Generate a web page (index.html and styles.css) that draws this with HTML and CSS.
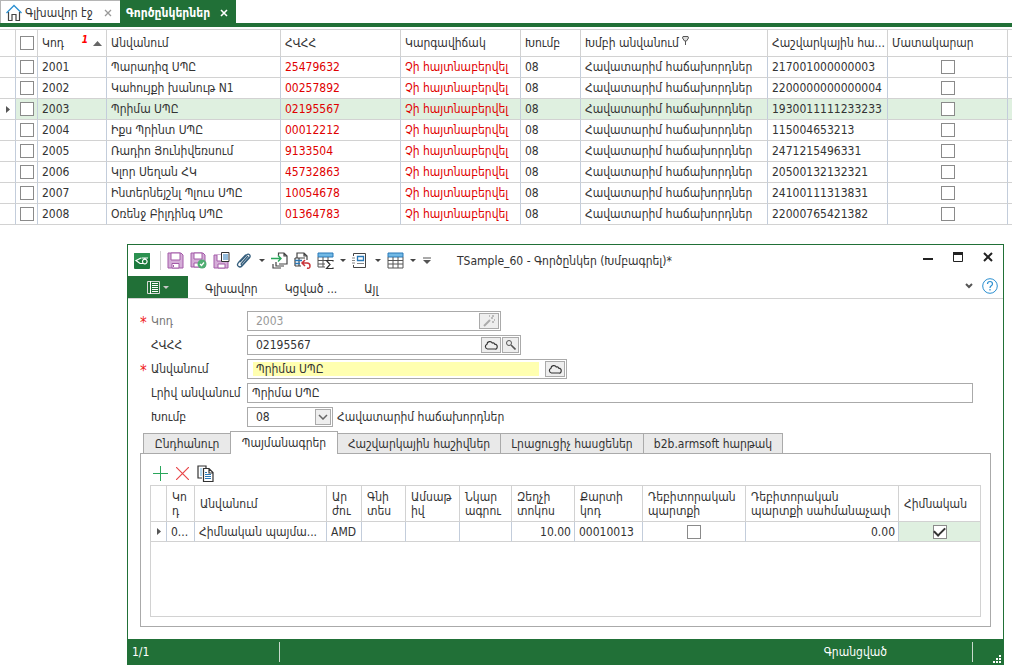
FILE: index.html
```html
<!DOCTYPE html>
<html lang="hy">
<head>
<meta charset="utf-8">
<meta name="viewport" content="width=device-width, initial-scale=1">
<title>Գործընկերներ</title>
<link rel="stylesheet" href="styles.css">
</head>
<body>
<nav class="doc-tabs">
  <div class="doc-tab">
    <svg class="home" width="16" height="18" viewBox="0 0 16 18" fill="none"><path d="M2.500 8v8.500h3.500v-6h4v6h3.500V8" stroke="#444" stroke-width="1.200"/><path d="M.5 9 8 1.500 15.500 9" stroke="#2b8fd0" stroke-width="1.300"/></svg>
    <a href="#home">Գլխավոր էջ</a>
    <button class="tab-close" aria-label="Փակել"><svg width="8" height="8" viewBox="0 0 8 8"><path d="M1 1l6 6M7 1 1 7" stroke="currentColor" stroke-width="1.300"/></svg></button>
  </div>
  <div class="doc-tab doc-tab-active">
    <a href="#partners">Գործընկերներ</a>
    <button class="tab-close" aria-label="Փակել"><svg width="8" height="8" viewBox="0 0 8 8"><path d="M1 1l6 6M7 1 1 7" stroke="currentColor" stroke-width="1.600"/></svg></button>
  </div>
</nav>

<table class="grid main-grid">
  <colgroup><col class="w-mark"><col class="w-check"><col class="w-code"><col class="w-name"><col class="w-wide"><col class="w-wide"><col class="w-group"><col class="w-gname"><col class="w-wide"><col class="w-wide"><col></colgroup>
  <thead>
    <tr>
      <th></th>
      <th class="mid"><input type="checkbox" class="box" aria-label="Ընտրել բոլորը"></th>
      <th><div class="sort-head"><span>Կոդ</span><span class="sort-no">1</span><svg width="9" height="5" viewBox="0 0 9 5"><path d="M0 5 4.500 0 9 5z" fill="#666"/></svg></div></th>
      <th>Անվանում</th><th>ՀՎՀՀ</th><th>Կարգավիճակ</th><th>Խումբ</th>
      <th>Խմբի անվանում <svg class="pin" width="7" height="9" viewBox="0 0 7 9"><path d="M1 .5h5L6.500 2 4.500 5h-2L.5 2z" fill="#ddd" stroke="#555"/><path d="M3.500 5v4" stroke="#555"/></svg></th>
      <th class="tight">Հաշվարկային հա...</th><th>Մատակարար</th><th></th>
    </tr>
  </thead>
  <tbody>
    <tr><td></td><td class="mid"><input type="checkbox" class="box" aria-label="2001"></td><td>2001</td><td>Պարադիզ ՍՊԸ</td><td class="red">25479632</td><td class="red">Չի հայտնաբերվել</td><td>08</td><td>Հավատարիմ հաճախորդներ</td><td>217001000000003</td><td class="mid"><input type="checkbox" class="box" aria-label="Մատակարար 2001"></td><td></td></tr>
    <tr><td></td><td class="mid"><input type="checkbox" class="box" aria-label="2002"></td><td>2002</td><td>Կահույքի խանութ N1</td><td class="red">00257892</td><td class="red">Չի հայտնաբերվել</td><td>08</td><td>Հավատարիմ հաճախորդներ</td><td>2200000000000004</td><td class="mid"><input type="checkbox" class="box" aria-label="Մատակարար 2002"></td><td></td></tr>
    <tr class="current"><td class="mid marker"><svg width="4" height="7" viewBox="0 0 4 7"><path d="M0 0 4 3.500 0 7z" fill="#555"/></svg></td><td class="mid"><input type="checkbox" class="box" aria-label="2003"></td><td>2003</td><td>Պրիմա ՍՊԸ</td><td class="red">02195567</td><td class="red">Չի հայտնաբերվել</td><td>08</td><td>Հավատարիմ հաճախորդներ</td><td>1930011111233233</td><td class="mid"><input type="checkbox" class="box" aria-label="Մատակարար 2003"></td><td></td></tr>
    <tr><td></td><td class="mid"><input type="checkbox" class="box" aria-label="2004"></td><td>2004</td><td>Իքս Պրինտ ՍՊԸ</td><td class="red">00012212</td><td class="red">Չի հայտնաբերվել</td><td>08</td><td>Հավատարիմ հաճախորդներ</td><td>115004653213</td><td class="mid"><input type="checkbox" class="box" aria-label="Մատակարար 2004"></td><td></td></tr>
    <tr><td></td><td class="mid"><input type="checkbox" class="box" aria-label="2005"></td><td>2005</td><td>Ռադիո Յունիվեռսում</td><td class="red">9133504</td><td class="red">Չի հայտնաբերվել</td><td>08</td><td>Հավատարիմ հաճախորդներ</td><td>2471215496331</td><td class="mid"><input type="checkbox" class="box" aria-label="Մատակարար 2005"></td><td></td></tr>
    <tr><td></td><td class="mid"><input type="checkbox" class="box" aria-label="2006"></td><td>2006</td><td>Կլոր Սեղան ՀԿ</td><td class="red">45732863</td><td class="red">Չի հայտնաբերվել</td><td>08</td><td>Հավատարիմ հաճախորդներ</td><td>20500132132321</td><td class="mid"><input type="checkbox" class="box" aria-label="Մատակարար 2006"></td><td></td></tr>
    <tr><td></td><td class="mid"><input type="checkbox" class="box" aria-label="2007"></td><td>2007</td><td>Ինտերնեյշնլ Պլուս ՍՊԸ</td><td class="red">10054678</td><td class="red">Չի հայտնաբերվել</td><td>08</td><td>Հավատարիմ հաճախորդներ</td><td>24100111313831</td><td class="mid"><input type="checkbox" class="box" aria-label="Մատակարար 2007"></td><td></td></tr>
    <tr><td></td><td class="mid"><input type="checkbox" class="box" aria-label="2008"></td><td>2008</td><td>Օռենջ Բիլդինգ ՍՊԸ</td><td class="red">01364783</td><td class="red">Չի հայտնաբերվել</td><td>08</td><td>Հավատարիմ հաճախորդներ</td><td>22000765421382</td><td class="mid"><input type="checkbox" class="box" aria-label="Մատակարար 2008"></td><td></td></tr>
  </tbody>
</table>

<section class="window">
  <header class="titlebar">
    <svg class="logo" width="16" height="16" viewBox="0 0 16 16"><rect width="16" height="16" rx="1" fill="#1c7a3e"/><path d="M0 1q0-1 1-1h14q1 0 1 1v4L0 8z" fill="#2b9150"/><path d="M7 5 2 7.500 6 10.500h3M7.500 5H14M8.500 8.500a2.300 2.300 0 1 0 4.600 0 2.300 2.300 0 1 0-4.600 0" fill="none" stroke="#fff" stroke-width="1.200"/></svg>
    <span class="divider"></span>
    <div class="tools">
      <button aria-label="Գրանցել"><svg width="17" height="17" viewBox="0 0 17 17"><path d="M1 1h13l2 2v13H1z" fill="#d5aed8" stroke="#a35aa8"/><path d="M4 1h9v7H4zM5 11.500h7V16H5z" fill="#fff" stroke="#a35aa8"/><path d="M6 13h1v2H6z" fill="#a35aa8"/></svg></button>
      <button aria-label="Գրանցել և փակել"><svg width="17" height="17" viewBox="0 0 17 17"><path d="M1 1h12l2 2v12H1z" fill="#d5aed8" stroke="#a35aa8"/><path d="M4 1h8v6H4zM4 11h7v4H4z" fill="#fff" stroke="#a35aa8"/><circle cx="12" cy="12" r="4.500" fill="#4fae72"/><path d="m10 12 1.500 1.500L14 10.500" fill="none" stroke="#fff" stroke-width="1.200"/></svg></button>
      <button aria-label="Գրանցել որպես"><svg width="17" height="17" viewBox="0 0 17 17"><path d="M1 3h14v13H1z" fill="#d5aed8" stroke="#a35aa8"/><path d="M4 3v6h8V3M5 12h7v4H5z" fill="#fff" stroke="#a35aa8"/><path d="M8.500.5h7.500v9H8.500z" fill="#fff" stroke="#333"/><path d="M10 3h5M10 5h5M10 7h5" stroke="#2878b8"/></svg></button>
      <button class="has-menu" aria-label="Կցել"><svg width="17" height="17" viewBox="0 0 17 17"><path d="m4 10 6.500-7c2-2 5 .5 3 2.700l-7.500 8.300c-2.500 2.500-6-.5-3.700-3.200l7.500-8M12 4l-6.500 7.500c-1 1.200.5 2.200 1.300 1.200L13.500 5" fill="none" stroke="#365f7d" stroke-width="1.300"/></svg><i class="caret"></i></button>
      <button aria-label="Ներմուծել"><svg width="17" height="17" viewBox="0 0 17 17" fill="none"><path d="M7.500 4V1h5.500l3 3v8H8M13 1v3h3M5 10v4h8M2 12v4h8" stroke="#444" stroke-width="1.200"/><path d="M0 6.500h10M7 3.500l3 3-3 3" stroke="#2aa65b" stroke-width="1.400"/></svg></button>
      <button aria-label="Վերականգնել"><svg width="17" height="17" viewBox="0 0 17 17" fill="none"><path d="M3 6V1h7l3 3v4M10 1v3h3M1 6h10M1 14V6m4 0v8M1 14h6" stroke="#444" stroke-width="1.200"/><path d="M1 8.500h7M1 11.500h5" stroke="#2878b8" stroke-width="1.500"/><path d="M8 11h5q3 0 3 3t-3 2M11 8l-3 3 3 3" stroke="#c8343a" stroke-width="1.500"/></svg></button>
      <button class="has-menu" aria-label="Հաշվետվություն"><svg width="17" height="17" viewBox="0 0 17 17" fill="none"><path d="M1 1h15v4H1z" fill="#72b9e5" stroke="#2878b8"/><path d="M1 5v10h7M1 8.500h14M1 12h7M6 5v10M11 5v3" stroke="#555"/><path d="M16 9.500V8.500H9.500l3.500 4-3.500 4H16v-1" stroke="#333" stroke-width="1.200"/></svg><i class="caret"></i></button>
      <button class="has-menu" aria-label="Ձևանմուշ"><svg width="17" height="17" viewBox="0 0 17 17" fill="none"><path d="M1.500 4V1.500h12v14h-12V13" stroke="#444"/><path d="M5.500 4.500h6v4h-6z" stroke="#2878b8" stroke-width="1.300"/><path d="M5 11.500h7M0 6h3M0 8.500h3M0 11h3" stroke="#888"/></svg><i class="caret"></i></button>
      <button class="has-menu" aria-label="Աղյուսակ"><svg width="17" height="17" viewBox="0 0 17 17" fill="none"><path d="M1 1h15v4H1z" fill="#72b9e5" stroke="#2878b8"/><path d="M1 5v11h15V5M1 8.500h15M1 12h15M6 5v11M11 5v11" stroke="#555"/></svg><i class="caret"></i></button>
      <button class="more" aria-label="Ավելին"><svg width="8" height="7" viewBox="0 0 8 7"><path d="M0 1h8" stroke="#555"/><path d="M0 3h8L4 7z" fill="#555"/></svg></button>
    </div>
    <h1 class="title">TSample_60 - Գործընկեր (Խմբագրել)*</h1>
    <div class="win-buttons">
      <button aria-label="Ծալել"><svg width="10" height="10" viewBox="0 0 10 10"><path d="M0 7h10" stroke="#222" stroke-width="2"/></svg></button>
      <button aria-label="Մեծացնել"><svg width="10" height="10" viewBox="0 0 10 10"><path d="M.5.5h9v9h-9z" fill="none" stroke="#222"/><path d="M0 1.500h10" stroke="#222" stroke-width="3"/></svg></button>
      <button aria-label="Փակել"><svg width="10" height="10" viewBox="0 0 10 10"><path d="m1 1 8 8M9 1 1 9" stroke="#222" stroke-width="2"/></svg></button>
    </div>
  </header>
  <nav class="ribbon">
    <button class="file-button" aria-label="Ընտրացանկ"><svg width="13" height="13" viewBox="0 0 13 13" fill="none"><path d="M.5.500h12v12H.5z" stroke="#d8d8d8"/><path d="M3.500 0v13M5 2.500h6M5 4.500h6M5 6.500h6M5 8.500h6M5 10.500h6" stroke="#fff"/></svg><i class="caret"></i></button>
    <a href="#main">Գլխավոր</a><a href="#attached">Կցված ...</a><a href="#other">Այլ</a>
    <div class="ribbon-end">
      <button aria-label="Բացել"><svg width="8" height="6" viewBox="0 0 8 6"><path d="m1 1 3 3 3-3" fill="none" stroke="#555" stroke-width="2"/></svg></button>
      <button aria-label="Օգնություն"><svg width="16" height="16" viewBox="0 0 16 16" fill="none" stroke="#2b8fd0"><circle cx="8" cy="8" r="7.300"/><path d="M5.500 6q0-2.500 2.500-2.500T10.500 6Q10.500 7 9 8 8 8.700 8 10M8 11v1.500" stroke-width="1.200"/></svg></button>
    </div>
  </nav>

  <form class="form">
    <label class="dim required" for="code">Կոդ</label>
    <div class="field f-code"><input id="code" type="text" value="2003" disabled><button type="button" class="mini" disabled aria-label="Գեներացնել"><svg width="12" height="12" viewBox="0 0 12 12"><path d="m1 11 6-6" stroke="#aaa" stroke-width="2"/><path d="M6 1h1M9 1h2M8 3h2M11 5h1M9 7h2" stroke="#aaa" stroke-width="1.500"/></svg></button></div>
    <label for="tin">ՀՎՀՀ</label>
    <div class="field f-tin"><input id="tin" type="text" value="02195567"><button type="button" class="mini" aria-label="Բեռնել"><svg width="14" height="10" viewBox="0 0 14 10"><path d="M3.500 9A2.500 2.500 0 0 1 3 4.200C3 1.500 7 .5 8.300 3q1.700-.7 2.400 1.200Q13.500 4.500 13.200 7T11 9z" fill="none" stroke="#333" stroke-width="1.200"/></svg></button><button type="button" class="mini slim" aria-label="Փնտրել"><svg width="10" height="10" viewBox="0 0 10 10" fill="none" stroke="#555"><circle cx="3" cy="3" r="2.500"/><path d="m5 5 4.500 4.500" stroke-width="1.600"/></svg></button></div>
    <label class="required" for="name">Անվանում</label>
    <div class="field f-name"><input id="name" class="yellow" type="text" value="Պրիմա ՍՊԸ"><button type="button" class="mini" aria-label="Բեռնել"><svg width="14" height="10" viewBox="0 0 14 10"><path d="M3.500 9A2.500 2.500 0 0 1 3 4.200C3 1.500 7 .5 8.300 3q1.700-.7 2.400 1.200Q13.500 4.500 13.200 7T11 9z" fill="none" stroke="#333" stroke-width="1.200"/></svg></button></div>
    <label for="fullname">Լրիվ անվանում</label>
    <div class="field f-full"><input id="fullname" type="text" value="Պրիմա ՍՊԸ"></div>
    <label for="group">Խումբ</label>
    <div class="group-row"><div class="field f-group"><select id="group"><option>08</option></select><span class="drop"><svg width="10" height="6" viewBox="0 0 10 6"><path d="m1 1 4 4 4-4" fill="none" stroke="#666" stroke-width="1.500"/></svg></span></div><span>Հավատարիմ հաճախորդներ</span></div>
  </form>

  <div class="pages">
    <div class="page-tabs" role="tablist">
      <button role="tab" class="t1">Ընդհանուր</button><button role="tab" class="t2 on" aria-selected="true">Պայմանագրեր</button><button role="tab" class="t3">Հաշվարկային հաշիվներ</button><button role="tab" class="t4">Լրացուցիչ հասցեներ</button><button role="tab" class="t5">b2b.armsoft հարթակ</button>
    </div>
    <div class="page">
      <div class="page-tools">
        <button aria-label="Ավելացնել"><svg width="15" height="15" viewBox="0 0 15 15"><path d="M7.500 0v15M0 7.500h15" stroke="#2aa65b"/></svg></button>
        <button aria-label="Ջնջել"><svg width="13" height="13" viewBox="0 0 13 13"><path d="m0 0 13 13M13 0 0 13" stroke="#e8474a" stroke-width="1.200"/></svg></button>
        <button aria-label="Պատճենել"><svg width="17" height="17" viewBox="0 0 17 17" fill="none"><path d="M5 13H1V1h8v2M6.500 3.500H12l4 4v9H6.500zM12 4v4h4" stroke="#333" stroke-width="1.200"/><path d="M3 4h2M3 6h2M3 8h2M3 10h2" stroke="#6bb5e5"/><path d="M8 7.500h2M8 9.500h6M8 11.500h6M8 13.500h6" stroke="#2878b8"/></svg></button>
      </div>
      <div class="sub-box">
        <table class="grid sub-grid">
          <colgroup><col class="s1"><col class="s2"><col class="s3"><col class="s4"><col class="s5"><col class="s6"><col class="s7"><col class="s8"><col class="s9"><col class="s10"><col class="s11"><col></colgroup>
          <thead><tr><th></th><th>Կո<br>դ</th><th>Անվանում</th><th>Ար<br>ժու</th><th>Գնի<br>տես</th><th>Ամսաթ<br>իվ</th><th>Նկար<br>ագրու</th><th>Զեղչի<br>տոկոս</th><th>Քարտի<br>կոդ</th><th>Դեբիտորական<br>պարտքի</th><th>Դեբիտորական<br>պարտքի սահմանաչափ</th><th>Հիմնական</th></tr></thead>
          <tbody><tr><td class="mid"><svg width="4" height="7" viewBox="0 0 4 7"><path d="M0 0 4 3.500 0 7z" fill="#555"/></svg></td><td class="tight">0...</td><td class="tight">Հիմնական պայմա...</td><td>AMD</td><td></td><td></td><td></td><td class="num">10.00</td><td>00010013</td><td class="mid"><input type="checkbox" class="box" aria-label="Դեբիտորական պարտքի"></td><td class="num">0.00</td><td class="mid focus"><input type="checkbox" class="box" checked aria-label="Հիմնական"></td></tr></tbody>
        </table>
      </div>
    </div>
  </div>

  <footer class="status">
    <span class="position">1/1</span>
    <span class="state">Գրանցված</span>
    <svg class="grip" width="8" height="8" viewBox="0 0 8 8" fill="#fff"><path d="M6 0h2v2H6zM3 3h2v2H3zM6 3h2v2H6zM0 6h2v2H0zM3 6h2v2H3zM6 6h2v2H6z"/></svg>
  </footer>
</section>
</body>
</html>
```

FILE: styles.css
```css
* { box-sizing: border-box; }
body {
  margin: 0;
  background: #fff;
  color: #333;
  font: 12px/14px "DejaVu Sans Condensed", "DejaVu Sans", sans-serif;
}
a { color: inherit; text-decoration: none; }
button, input, select { font: inherit; color: inherit; margin: 0; padding: 0; border: 0; background: none; }
button { display: inline-flex; align-items: center; justify-content: center; }
svg { display: block; flex: none; }

.doc-tabs { display: flex; height: 27px; border-bottom: 4px solid #217037; }
.doc-tab {
  display: flex; align-items: center; width: 120px; padding: 2px 8px 0 5px; gap: 3px;
  border: 1px solid #b5b5b5; border-width: 1px 0 0 1px; white-space: nowrap;
}
.tab-close { margin-left: auto; color: #999; }
.doc-tab-active { width: 116px; background: #217037; border-color: #217037; color: #fff; font-weight: bold; }
.doc-tab-active .tab-close { color: #fff; }

.grid { width: 100%; table-layout: fixed; border-collapse: separate; border-spacing: 0; }
.grid th, .grid td {
  overflow: hidden; padding: 0 4px; text-align: left; font-weight: normal;
  white-space: nowrap; text-overflow: ellipsis;
  border-right: 1px solid #c3cddb; border-bottom: 1px solid #d2d2d2;
}
.grid th { border-right-color: #d2d2d2; }
.grid tr > :last-child { border-right: 0; }
.grid .tight { padding-right: 0; text-overflow: clip; }
.grid .mid { padding: 0; text-align: center; }
.grid .mid svg { margin: 0 auto; }
.grid .num { text-align: right; padding-right: 3px; }
.grid .red { color: #e00000; }
.main-grid { margin-top: 2px; border-top: 1px solid #d2d2d2; }
.main-grid th { height: 27px; }
.main-grid td { height: 21px; }
.main-grid .current td { background: #dff0e0; }
.main-grid .current .marker { background: #fff; }
.w-mark { width: 16px; }
.w-check { width: 22px; }
.w-code { width: 69px; }
.w-name { width: 174px; }
.w-wide { width: 120px; }
.w-group { width: 60px; }
.w-gname { width: 187px; }
.sort-head { display: flex; align-items: center; gap: 5px; }
.sort-no { margin: -6px 0 0 auto; color: #f00; font-size: 10px; font-weight: bold; font-style: italic; }
.pin { display: inline-block; vertical-align: 2px; }
.box {
  appearance: none; display: inline-grid; place-items: center; width: 14px; height: 14px;
  vertical-align: middle; border: 1px solid #8a8a8a; background: #fff;
}
.box:checked::after {
  content: ""; width: 9px; height: 5px; margin-bottom: 3px;
  border: solid #333; border-width: 0 0 2px 2px; transform: rotate(-45deg);
}

.window { margin: 19px 8px 0 127px; border: 1px solid #217037; }
.titlebar { display: flex; align-items: center; height: 31px; padding: 0 10px 0 6px; }
.divider { width: 1px; height: 19px; margin: 0 6px 0 10px; background: #d2d2d2; }
.tools { display: flex; align-items: center; gap: 6px; }
.has-menu { gap: 6px; }
.caret { border: 3px solid transparent; border-top-color: #444; border-bottom: 0; }
.more { margin-left: 1px; }
.title { margin: 0 auto 0 26px; font-size: 12px; line-height: 14px; font-weight: normal; white-space: nowrap; }
.win-buttons { display: flex; gap: 20px; margin-top: -8px; }
.ribbon { display: flex; height: 23px; border-bottom: 1px solid #d2d2d2; }
.ribbon a { padding: 6px 0 0; margin-right: 27px; }
.file-button { width: 60px; margin-right: 17px; gap: 3px; background: #217037; }
.file-button .caret { border-top-color: #c8c8c8; }
.ribbon-end { display: flex; align-items: center; gap: 9px; margin: -2px 5px 0 auto; }

.form { display: grid; grid-template-columns: 96px 1fr; row-gap: 4px; padding: 12px 30px 0 23px; align-items: center; }
.form label { position: relative; white-space: nowrap; }
.form .dim { color: #777; }
.required::before { content: "*"; position: absolute; right: 100%; width: 11px; color: #f02020; font-size: 15px; top: 2px; }
.field { display: flex; align-items: center; height: 20px; border: 1px solid #aaa; padding-right: 1px; gap: 1px; position: relative; }
.field input { flex: 1; min-width: 0; height: 14px; padding-left: 8px; outline: 0; background: transparent; }
.field input:disabled { color: #999; }
.field .yellow { background: #ffffb0; margin: 0 5px; padding-left: 3px; }
.f-code { width: 254px; }
.f-tin { width: 274px; }
.f-name { width: 320px; }
.f-full { width: 726px; max-width: 100%; }
.f-full input { padding-left: 4px; }
.f-group { width: 86px; }
.f-group select { appearance: none; width: 100%; height: 18px; padding-left: 8px; outline: 0; }
.mini, .drop { width: 20px; height: 16px; border: 1px solid #aaa; background: #eee; }
.slim { width: 17px; }
.drop { position: absolute; right: 1px; top: 1px; width: 16px; display: grid; place-items: center; pointer-events: none; }
.group-row { display: flex; align-items: center; gap: 4px; }

.pages { padding: 4px 12px 0; }
.page-tabs { display: flex; align-items: flex-end; height: 22px; padding-left: 3px; }
.page-tabs button {
  height: 20px; border: 1px solid #aaa; border-width: 1px 1px 0 0; background: #e9e9e9; white-space: nowrap;
}
.page-tabs .t1 { width: 87px; border-left-width: 1px; border-right-width: 0; }
.page-tabs .t2 { width: 108px; border-left-width: 1px; }
.page-tabs .t3 { width: 163px; }
.page-tabs .t4 { width: 143px; }
.page-tabs .t5 { width: 139px; }
.page-tabs .on { height: 23px; margin-bottom: -1px; background: #fff; z-index: 1; }
.page { border: 1px solid #aaa; padding: 11px 9px 9px; }
.page-tools { display: flex; align-items: center; gap: 8px; height: 17px; padding-left: 3px; margin-bottom: 3px; }
.sub-box { height: 132px; border: 1px solid #d2d2d2; }
.sub-grid th { height: 36px; line-height: 14px; padding-left: 5px; padding-right: 0; }
.sub-grid td { height: 20px; }
.sub-grid .focus { background: #dff0e0; }
.s1 { width: 16px; }
.s2 { width: 28px; }
.s3 { width: 132px; }
.s4 { width: 35px; }
.s5 { width: 44px; }
.s6 { width: 54px; }
.s7 { width: 52px; }
.s8 { width: 63px; }
.s9 { width: 68px; }
.s10 { width: 103px; }
.s11 { width: 153px; }

.status { display: flex; align-items: center; height: 25px; margin-top: 12px; padding-left: 4px; background: #217037; color: #fff; }
.position { width: 148px; padding: 3px 0; border-right: 1px solid #c9d9cd; }
.state { margin-left: auto; padding: 3px 85px 3px 0; border-right: 1px solid #c9d9cd; }
.grip { align-self: flex-end; margin: 0 2px 1px 20px; }
```
